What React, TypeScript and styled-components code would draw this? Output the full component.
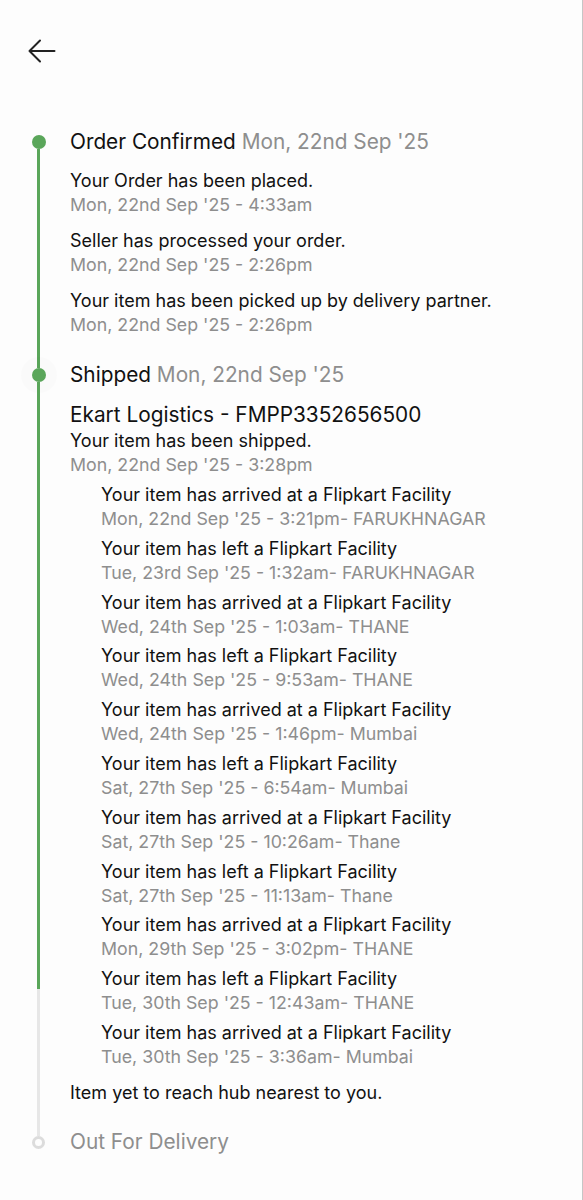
import React from "react";
import styled, { createGlobalStyle } from "styled-components";

const GlobalStyle = createGlobalStyle`
    html, body {
        margin: 0;
        padding: 0;
        background: #fdfdfd;
    }
    body {
        font-family: Inter, "Noto Sans", "Liberation Sans", sans-serif;
        color: #111;
        -webkit-font-smoothing: antialiased;
    }
`;

const GREEN = "#5aa65a";
const GREY_LINE = "#e7e7e7";

const Page = styled.div`
    width: 583px;
    min-height: 1200px;
    box-sizing: border-box;
    border-right: 1px solid #c6c6c6;
    background: #fdfdfd;
`;

const Header = styled.div`
    height: 128px;
    padding: 37px 0 0 27px;
    box-sizing: border-box;
`;

const BackButton = styled.button`
    border: 0;
    padding: 0;
    background: none;
    width: 29px;
    height: 28px;
    color: #222;
    cursor: pointer;
`;

const Timeline = styled.div`
    display: flex;
    flex-direction: column;
`;

const Step = styled.section`
    display: grid;
    grid-template-columns: 70px 1fr;
`;

const Rail = styled.div`
    display: flex;
    flex-direction: column;
    align-items: flex-start;
`;

const Segment = styled.div<{ $color: string; $h?: number }>`
    width: 3px;
    margin-left: 37px;
    background: ${({ $color }) => $color};
    ${({ $h }) => ($h !== undefined ? `height: ${$h}px;` : "flex: 1;")}
`;

const Dot = styled.div<{ $state: "done" | "active" | "pending" }>`
    width: ${({ $state }) => ($state === "pending" ? 13 : 14)}px;
    height: ${({ $state }) => ($state === "pending" ? 13 : 14)}px;
    margin-left: ${({ $state }) => ($state === "pending" ? 32 : 31.5)}px;
    border-radius: 50%;
    box-sizing: border-box;
    flex-shrink: 0;
    background: ${({ $state }) => ($state === "pending" ? "#fdfdfd" : GREEN)};
    border: ${({ $state }) => ($state === "pending" ? `3px solid #dcdcdc` : "none")};
    box-shadow: ${({ $state }) =>
        $state === "active" ? "0 0 0 11px rgba(0, 0, 0, 0.012)" : "none"};
`;

const Content = styled.div<{ $pb: number }>`
    padding-bottom: ${({ $pb }) => $pb}px;
    display: flex;
    flex-direction: column;
`;

const Title = styled.h2<{ $muted?: boolean }>`
    margin: 0;
    font-size: 20.8px;
    line-height: 28px;
    font-weight: 400;
    color: ${({ $muted }) => ($muted ? "#8e8e8e" : "#111")};
`;

const TitleDate = styled.span`
    color: #8e8e8e;
`;

const Events = styled.div<{ $gap: number; $indent?: number; $mt?: number }>`
    display: flex;
    flex-direction: column;
    gap: ${({ $gap }) => $gap}px;
    padding-left: ${({ $indent }) => $indent ?? 0}px;
    margin-top: ${({ $mt }) => $mt ?? 0}px;
`;

const Event = styled.div<{ $mt?: number }>`
    display: flex;
    flex-direction: column;
    margin-top: ${({ $mt }) => $mt ?? 0}px;
`;

const Text = styled.div`
    font-size: 18px;
    line-height: 24px;
    color: #111;
`;

const Meta = styled.div`
    font-size: 17.8px;
    line-height: 24px;
    color: #8e8e8e;
`;

const Courier = styled.div`
    font-size: 20.8px;
    line-height: 26px;
    color: #111;
    margin-top: 13px;
`;

const Note = styled(Text)`
    margin-top: 12px;
`;

type Ev = { text: string; meta: string };

const confirmed: Ev[] = [
    { text: "Your Order has been placed.", meta: "Mon, 22nd Sep '25 - 4:33am" },
    { text: "Seller has processed your order.", meta: "Mon, 22nd Sep '25 - 2:26pm" },
    {
        text: "Your item has been picked up by delivery partner.",
        meta: "Mon, 22nd Sep '25 - 2:26pm",
    },
];

const ARR = "Your item has arrived at a Flipkart Facility";
const LEFT = "Your item has left a Flipkart Facility";

const hops: Ev[] = [
    { text: ARR, meta: "Mon, 22nd Sep '25 - 3:21pm- FARUKHNAGAR" },
    { text: LEFT, meta: "Tue, 23rd Sep '25 - 1:32am- FARUKHNAGAR" },
    { text: ARR, meta: "Wed, 24th Sep '25 - 1:03am- THANE" },
    { text: LEFT, meta: "Wed, 24th Sep '25 - 9:53am- THANE" },
    { text: ARR, meta: "Wed, 24th Sep '25 - 1:46pm- Mumbai" },
    { text: LEFT, meta: "Sat, 27th Sep '25 - 6:54am- Mumbai" },
    { text: ARR, meta: "Sat, 27th Sep '25 - 10:26am- Thane" },
    { text: LEFT, meta: "Sat, 27th Sep '25 - 11:13am- Thane" },
    { text: ARR, meta: "Mon, 29th Sep '25 - 3:02pm- THANE" },
    { text: LEFT, meta: "Tue, 30th Sep '25 - 12:43am- THANE" },
    { text: ARR, meta: "Tue, 30th Sep '25 - 3:36am- Mumbai" },
];

const EventList: React.FC<{ items: Ev[]; gap: number; indent?: number; mt?: number }> = ({
    items,
    gap,
    indent,
    mt,
}) => (
    <Events $gap={gap} $indent={indent} $mt={mt}>
        {items.map((e, i) => (
            <Event key={i}>
                <Text>{e.text}</Text>
                <Meta>{e.meta}</Meta>
            </Event>
        ))}
    </Events>
);

// green progress inside the shipped step ends part-way down
const SHIPPED_PROGRESS = 607;

export default function App() {
    return (
        <Page>
            <GlobalStyle />
            <Header>
                <BackButton aria-label="Back">
                    <svg width="29" height="28" viewBox="0 0 29 28" fill="none">
                        <path
                            d="M27.5 14H2.5M13 3.5L2.5 14L13 24.5"
                            stroke="currentColor"
                            strokeWidth="2"
                            strokeLinecap="round"
                            strokeLinejoin="round"
                        />
                    </svg>
                </BackButton>
            </Header>

            <Timeline>
                <Step>
                    <Rail>
                        <Segment $color="transparent" $h={7} />
                        <Dot $state="done" />
                        <Segment $color={GREEN} />
                    </Rail>
                    <Content $pb={24}>
                        <Title>
                            Order Confirmed <TitleDate>Mon, 22nd Sep '25</TitleDate>
                        </Title>
                        <EventList items={confirmed} gap={12} mt={13} />
                    </Content>
                </Step>

                <Step>
                    <Rail>
                        <Segment $color={GREEN} $h={7} />
                        <Dot $state="active" />
                        <Segment $color={GREEN} $h={SHIPPED_PROGRESS} />
                        <Segment $color={GREY_LINE} />
                    </Rail>
                    <Content $pb={23}>
                        <Title>
                            Shipped <TitleDate>Mon, 22nd Sep '25</TitleDate>
                        </Title>
                        <Courier>Ekart Logistics - FMPP3352656500</Courier>
                        <Event $mt={1}>
                            <Text>Your item has been shipped.</Text>
                            <Meta>Mon, 22nd Sep '25 - 3:28pm</Meta>
                        </Event>
                        <EventList items={hops} gap={5.8} indent={31} mt={6} />
                        <Note>Item yet to reach hub nearest to you.</Note>
                    </Content>
                </Step>

                <Step>
                    <Rail>
                        <Segment $color={GREY_LINE} $h={8} />
                        <Dot $state="pending" />
                    </Rail>
                    <Content $pb={40}>
                        <Title $muted>Out For Delivery</Title>
                    </Content>
                </Step>
            </Timeline>
        </Page>
    );
}
